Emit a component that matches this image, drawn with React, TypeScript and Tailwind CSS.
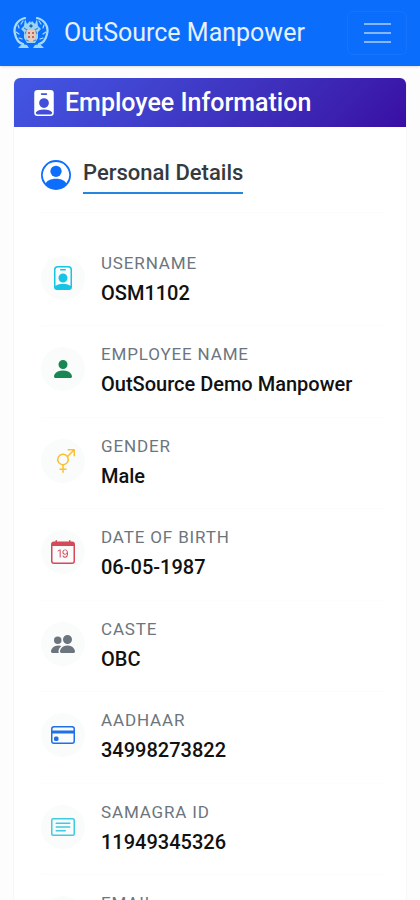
import type { IconType } from "react-icons";
import {
  BsCalendarDate,
  BsCardText,
  BsCreditCard,
  BsEnvelope,
  BsGenderAmbiguous,
  BsPeopleFill,
  BsPersonBadge,
  BsPersonBadgeFill,
  BsPersonCircle,
  BsPersonFill,
} from "react-icons/bs";

interface Detail {
  label: string;
  value: string;
  icon: IconType;
  color: string;
}

const DETAILS: Detail[] = [
  { label: "USERNAME", value: "OSM1102", icon: BsPersonBadge, color: "text-[#16c5e3]" },
  { label: "EMPLOYEE NAME", value: "OutSource Demo Manpower", icon: BsPersonFill, color: "text-[#198754]" },
  { label: "GENDER", value: "Male", icon: BsGenderAmbiguous, color: "text-[#fbc02d]" },
  { label: "DATE OF BIRTH", value: "06-05-1987", icon: BsCalendarDate, color: "text-[#d5495a]" },
  { label: "CASTE", value: "OBC", icon: BsPeopleFill, color: "text-[#6c757d]" },
  { label: "AADHAAR", value: "34998273822", icon: BsCreditCard, color: "text-[#1f6fe8]" },
  { label: "SAMAGRA ID", value: "11949345326", icon: BsCardText, color: "text-[#3fcbe0]" },
  { label: "EMAIL", value: "", icon: BsEnvelope, color: "text-[#198754]" },
];

function Emblem() {
  return (
    <svg viewBox="0 0 36 34" className="h-[34px] w-9 shrink-0" fill="none" aria-hidden="true">
      {/* laurel branches */}
      <g stroke="#a9dcff" strokeLinecap="round">
        <path d="M12 2C4 4 0 11 2 18c1 5 4 9 8 10" strokeWidth="2.2" />
        <path d="M24 2c8 2 12 9 10 16-1 5-4 9-8 10" strokeWidth="2.2" />
        <path d="M10 5 8 8M5 9l1 3M3 16l3 2M6 22l3 1M26 5l2 3M31 9l-1 3M33 16l-3 2M30 22l-3 1" strokeWidth="1.2" />
      </g>
      {/* figures round the shield */}
      <path
        d="m12 3 2 5 3-3 1 2 1-2 3 3 2-5 1 7 3 3-3 3v6l-3 5h-8l-3-5v-6l-3-3 3-3z"
        fill="#9bd5f5"
      />
      <path d="m11 12 3 2-2 4m13-6-3 2 2 4M13 24l3 1M23 24l-3 1" stroke="#4b8cc4" strokeWidth="1.2" />
      <path d="M13.500 14h9v6c0 3-2 5-4.500 6-2.500-1-4.500-3-4.500-6z" fill="#e9c9bb" />
      <path d="M15 16h2v2h-2zM19 16h2v2h-2zM15 20h2v2h-2zM19 20h2v2h-2z" fill="#c06a5e" />
      <path d="m16 10 2-2 2 2-2 2z" fill="#276baa" />
      {/* ribbon ends */}
      <path d="m5 32 4-4 5 1 2 3zM31 32l-4-4-5 1-2 3z" fill="#9fd6fb" />
    </svg>
  );
}

function Navbar() {
  return (
    <header className="flex h-[66px] shrink-0 items-center bg-[#0a6dfc] px-[13px] shadow-sm">
      <a href="#" className="flex items-center gap-[15px] text-[25px] leading-9 text-white/90">
        <Emblem />
        OutSource Manpower
      </a>
      <button
        type="button"
        aria-label="Toggle navigation"
        className="ml-auto flex h-11 w-[60px] flex-col items-center justify-center gap-[7px] rounded-md border border-white/5"
      >
        <span className="h-0.5 w-[27px] bg-white/50" />
        <span className="h-0.5 w-[27px] bg-white/50" />
        <span className="h-0.5 w-[27px] bg-white/50" />
      </button>
    </header>
  );
}

function DetailRow({ label, value, icon: Icon, color }: Detail) {
  return (
    <div className="flex min-h-[91px] gap-4 border-b border-[#fcfcfc] even:min-h-[92px]">
      <div className="mt-[21px] flex size-11 shrink-0 items-center justify-center rounded-full bg-[#fafbfb]">
        <Icon className={`size-6 ${color}`} />
      </div>
      <div className="pt-4">
        <dt className="text-[17px] leading-6 tracking-wider text-[#6c757d]">{label}</dt>
        <dd className="mt-0.5 text-xl leading-8 font-medium text-[#111111]">{value}</dd>
      </div>
    </div>
  );
}

export default function App() {
  return (
    <div className="flex h-screen flex-col overflow-hidden bg-[#fdfdfd] font-[Roboto,sans-serif]">
      <Navbar />
      <main className="px-[13px] pt-3">
        <section className="rounded-md border-x border-[#f7f7f8] bg-white">
          <h1 className="flex h-[49px] items-center gap-2 rounded-t-md bg-linear-135 from-[#4257e4] to-[#390ca3] px-[17px] text-[25px] font-medium text-white">
            <BsPersonBadgeFill className="size-[26px]" />
            Employee Information
          </h1>
          <div className="pt-8 pr-[22px] pl-[27px]">
            <div className="flex h-[54px] gap-3 border-b border-[#fcfcfc]">
              <BsPersonCircle className="mt-px size-[30px] text-[#0d6efd]" />
              <h2 className="h-[35px] border-b-2 border-[#2487dd] text-[22px] leading-7 font-medium text-[#343a40]">
                Personal Details
              </h2>
            </div>
            <dl className="pt-[22px]">
              {DETAILS.map((d) => (
                <DetailRow key={d.label} {...d} />
              ))}
            </dl>
          </div>
        </section>
      </main>
    </div>
  );
}
